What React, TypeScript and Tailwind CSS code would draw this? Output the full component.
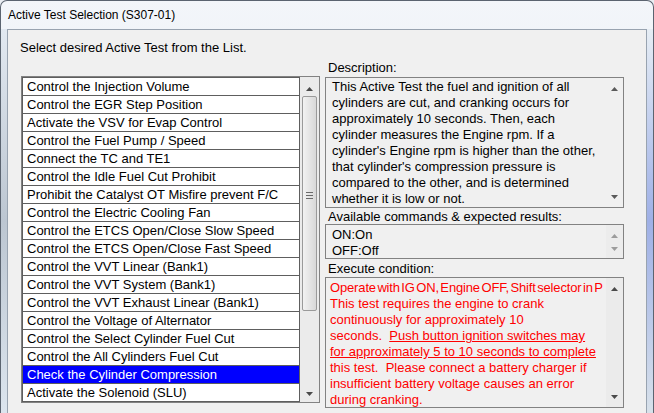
import React from "react";

const items = [
  "Control the Injection Volume",
  "Control the EGR Step Position",
  "Activate the VSV for Evap Control",
  "Control the Fuel Pump / Speed",
  "Connect the TC and TE1",
  "Control the Idle Fuel Cut Prohibit",
  "Prohibit the Catalyst OT Misfire prevent F/C",
  "Control the Electric Cooling Fan",
  "Control the ETCS Open/Close Slow Speed",
  "Control the ETCS Open/Close Fast Speed",
  "Control the VVT Linear (Bank1)",
  "Control the VVT System (Bank1)",
  "Control the VVT Exhaust Linear (Bank1)",
  "Control the Voltage of Alternator",
  "Control the Select Cylinder Fuel Cut",
  "Control the All Cylinders Fuel Cut",
  "Check the Cylinder Compression",
  "Activate the Solenoid (SLU)",
];

const selected = "Check the Cylinder Compression";

function Arrow({ dir, className }: { dir: "up" | "down"; className?: string }) {
  return (
    <svg width="7" height="4" viewBox="0 0 7 4" className={className}>
      <path d={dir === "up" ? "M0 4 L3.5 0 L7 4Z" : "M0 0 L7 0 L3.5 4Z"} fill="currentColor" />
    </svg>
  );
}

function ListScrollbar() {
  return (
    <div className="flex w-[19px] flex-col items-center bg-[#ebebeb] pt-[10px] pb-[6px]">
      <Arrow dir="up" className="text-[#4a4a4a]" />
      <div className="mt-[5px] flex h-[215px] w-[15px] items-center justify-center rounded-[2px] border border-[#9a9a9a] bg-gradient-to-r from-[#f2f2f2] to-[#d8d8d8]">
        <div className="-mt-[16px] flex flex-col gap-[2px]">
          <div className="h-px w-[7px] bg-[#6a6a6a]" />
          <div className="h-px w-[7px] bg-[#6a6a6a]" />
          <div className="h-px w-[7px] bg-[#6a6a6a]" />
        </div>
      </div>
      <div className="flex-1" />
      <Arrow dir="down" className="text-[#4a4a4a]" />
    </div>
  );
}

function BoxScroll({ tone, pad }: { tone: string; pad: string }) {
  return (
    <div className={`flex w-[17px] shrink-0 flex-col items-center ${pad} ${tone}`}>
      <Arrow dir="up" />
      <div className="flex-1" />
      <Arrow dir="down" />
    </div>
  );
}

export default function App() {
  return (
    <div className="h-[413px] w-[654px] overflow-hidden bg-[#e9edf2] font-['Liberation_Sans',Arial,sans-serif] text-[13px] text-black">
      <div className="flex h-[413px] flex-col rounded-t-[7px] border border-b-0 border-[#5b6470] bg-gradient-to-b from-[#f3f6fa] via-[#e4ebf3] to-[#d6e0eb]">
        <div className="flex h-[28px] items-center pl-[7px] text-[12px] leading-none">
          Active Test Selection (S307-01)
        </div>
        <div className="flex flex-1">
          <div className="w-[6px] bg-gradient-to-b from-[#e2e9f1] via-[#bcc6d1] to-[#dce5ee]" />
          <div className="flex-1 border-x border-t border-[#98a3b0] bg-[#f0f0f0] pl-[13px]">
            <div className="-ml-px pt-[10px] leading-[16px]">Select desired Active Test from the List.</div>
            <div className="mt-[3px] flex items-start gap-[5px]">
              <div className="mt-[17px] flex h-[327px] w-[299px] border border-[#828282] bg-white">
                <div className="flex w-[278px] flex-col border-x border-t border-[#5e5e5e]">
                  {items.map((it) => (
                    <div
                      key={it}
                      className={`h-[18px] shrink-0 border-b border-[#5e5e5e] pl-[4px] leading-[17px] whitespace-nowrap ${
                        it === selected ? "bg-[#0000ff] text-white" : "bg-white"
                      }`}
                    >
                      {it}
                    </div>
                  ))}
                </div>
                <ListScrollbar />
              </div>

              <div className="w-[299px]">
                <div className="pl-[3px] pt-[1px] leading-[15px]">Description:</div>
                <div className="mt-[2px] flex h-[131px] border border-[#828282] bg-[#f0f0f0]">
                  <div className="flex-1 pl-[6px] pt-[1px] leading-[16px]">
                    This Active Test the fuel and ignition of all
                    <br />
                    cylinders are cut, and cranking occurs for
                    <br />
                    approximately 10 seconds. Then, each
                    <br />
                    cylinder measures the Engine rpm. If a
                    <br />
                    cylinder's Engine rpm is higher than the other,
                    <br />
                    that cylinder's compression pressure is
                    <br />
                    compared to the other, and is determined
                    <br />
                    whether it is low or not.
                  </div>
                  <BoxScroll tone="text-[#5a5a5a]" pad="pt-[9px] pb-[8px]" />
                </div>

                <div className="mt-[1px] pl-[3px] leading-[15px]">Available commands &amp; expected results:</div>
                <div className="flex h-[35px] border border-[#828282] bg-[#f0f0f0]">
                  <div className="flex-1 pl-[6px] pt-[2px] leading-[16px]">
                    ON:On
                    <br />
                    OFF:Off
                  </div>
                  <BoxScroll tone="text-[#9c9c9c] bg-[#ececec]" pad="pt-[9px] pb-[7px]" />
                </div>

                <div className="mt-[2px] pl-[3px] leading-[15px]">Execute condition:</div>
                <div className="mt-px flex h-[131px] border border-[#828282] bg-[#f0f0f0]">
                  <div className="min-w-0 flex-1 overflow-hidden pl-[4px] pt-[2px] leading-[16px] whitespace-pre text-[#ff0000]">
                    <div className="tracking-[-0.15px] [word-spacing:-2px]">Operate with IG ON, Engine OFF, Shift selector in P</div>
                    <div>This test requires the engine to crank</div>
                    <div>continuously for approximately 10</div>
                    <div>
                      seconds.  <span className="underline">Push button ignition switches may</span>
                    </div>
                    <div className="underline">for approximately 5 to 10 seconds to complete</div>
                    <div>this test.  Please connect a battery charger if</div>
                    <div>insufficient battery voltage causes an error</div>
                    <div>during cranking.</div>
                  </div>
                  <BoxScroll tone="text-[#4a4a4a] bg-[#ebebeb]" pad="pt-[9px] pb-[8px]" />
                </div>
              </div>
            </div>
          </div>
          <div className="w-[6px] bg-gradient-to-b from-[#e6edf4] via-[#9fb0e6] to-[#d8e1ea]" />
        </div>
      </div>
    </div>
  );
}
